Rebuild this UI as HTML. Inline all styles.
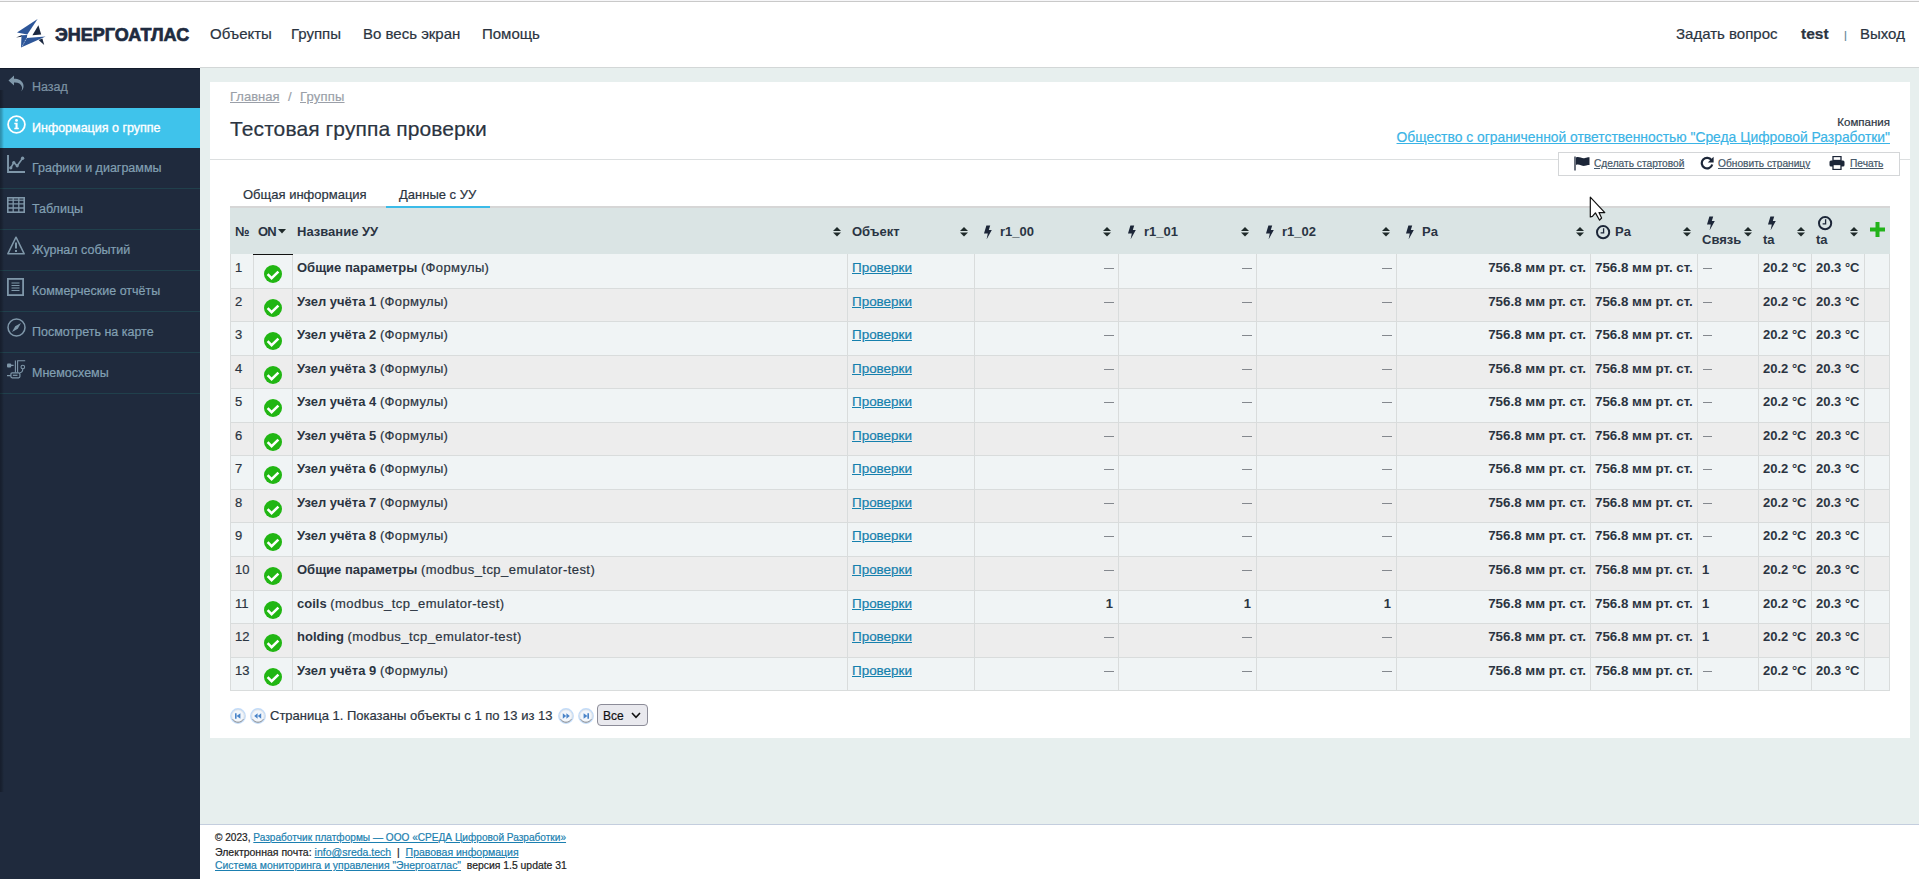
<!DOCTYPE html>
<html lang="ru">
<head>
<meta charset="utf-8">
<title>Энергоатлас</title>
<style>
*{box-sizing:border-box;}
html,body{margin:0;padding:0;}
body{width:1919px;height:879px;overflow:hidden;position:relative;background:#e7efee;font-family:"Liberation Sans",sans-serif;color:#2b3441;-webkit-text-stroke:0.2px currentColor;}
.abs{position:absolute;white-space:nowrap;}
.ic{position:absolute;display:block;}
#hdr{position:absolute;left:0;top:0;width:1919px;height:68px;background:#fff;}
#hdr .topline{position:absolute;left:0;top:1px;width:1919px;height:1px;background:#c9c9c9;}
#hdr .top0{position:absolute;left:0;top:0;width:1919px;height:1px;background:#f6f6f8;}
#hdr .bot{position:absolute;left:200px;top:67px;width:1719px;height:1px;background:#d3d7d7;}
.nav{position:absolute;top:24px;font-size:15px;line-height:20px;color:#2b3441;white-space:nowrap;}
#side{position:absolute;left:0;top:68px;width:200px;height:811px;background:#1f2a3d;}
#side .shadow{position:absolute;left:0;top:0;width:2px;height:724px;background:#19212f;}
.shd{position:absolute;left:0;top:90px;width:4px;height:702px;background:linear-gradient(to right,rgba(0,0,0,0.28),rgba(0,0,0,0.2) 40%,rgba(0,0,0,0) 100%);z-index:5;}
.shd0{position:absolute;left:0;top:68px;width:200px;height:1px;background:#131c2c;z-index:5;}
.si{position:absolute;left:0;width:200px;height:40px;}
.si .t{position:absolute;left:32px;top:12px;font-size:12.5px;line-height:16px;color:#82a0b3;white-space:nowrap;}
.si.act{background:#3fc3eb;}
.si.act .t{color:#fff;-webkit-text-stroke:0.35px #fff;}
.sdiv{position:absolute;left:0;width:200px;height:1px;background:#20404c;}
#panel{position:absolute;left:210px;top:82px;width:1700px;height:656px;background:#fff;}
a{color:inherit;}
.tb{position:absolute;top:187px;font-size:13px;line-height:16px;color:#2b3441;white-space:nowrap;}
.th{position:absolute;font-size:13px;line-height:16px;font-weight:bold;color:#2a3443;white-space:nowrap;}
.cell{position:absolute;font-size:13px;line-height:16px;white-space:nowrap;color:#2b3441;}
.b,b,.th{font-weight:bold;-webkit-text-stroke:0;}
.dash{color:#7a8088;}
.lnk{color:#1580ad;text-decoration:underline;font-size:13.45px;}
#foot{position:absolute;left:200px;top:824px;width:1719px;height:55px;background:#fff;border-top:1px solid #c4cede;}
#foot .ln{position:absolute;left:15px;font-size:10.1px;line-height:14px;color:#222;white-space:nowrap;}
#foot a{color:#1b7fb0;text-decoration:underline;}
</style>
</head>
<body>

<div id="hdr">
  <div class="top0"></div><div class="topline"></div>
  <svg class="ic" style="left:12px;top:14px" width="40" height="38" viewBox="0 0 40 38">
    <polygon points="25.6,5 5,18.6 15.3,20.6" fill="#2d5699"/>
    <polygon points="26.4,11.3 29.2,20.6 20.4,21.3" fill="#1b2840"/>
    <polygon points="4,23.6 10,21 9.6,22.8" fill="#1b2840"/>
    <polygon points="9.5,21.2 15.2,21 14.8,23.9 33.6,22.4 9,33.4" fill="#2d5699"/>
    <polygon points="26.6,26 30.4,24.6 32.2,30.9" fill="#1b2840"/>
    <path d="M14.6 24.2 L10 32.6" stroke="#fff" stroke-width="0.6" stroke-dasharray="1.2 0.8"/>
  </svg>
  <div class="abs" style="left:55px;top:23px;font-size:18px;line-height:24px;font-weight:bold;color:#1e2b40;-webkit-text-stroke:0.7px #1e2b40;">ЭНЕРГОАТЛАС</div>
  <div class="nav" style="left:210px">Объекты</div>
  <div class="nav" style="left:291px">Группы</div>
  <div class="nav" style="left:363px">Во весь экран</div>
  <div class="nav" style="left:482px">Помощь</div>
  <div class="nav" style="left:1676px">Задать вопрос</div>
  <div class="nav" style="left:1801px;font-weight:bold;font-size:15.5px">test</div>
  <div class="nav" style="left:1844px;font-size:11px;color:#5f7f95;top:25px">|</div>
  <div class="nav" style="left:1860px">Выход</div>
  <div class="bot"></div>
</div>

<div id="side"></div><div class="shd"></div><div class="shd0"></div>
<div class="si" style="top:68px"><svg class="ic" style="left:8px;top:7px" width="16" height="17" viewBox="0 0 16 17"><path d="M6 0.5 L0.5 5.5 L6 10.5 L6 7.5 C10 7.3 13 8.5 14 12 C14.3 13.5 13.8 15.5 13 16.5 C15.5 14.5 16 11.5 15.2 9 C14 5.5 10.5 3.8 6 3.8 Z" fill="#7f97a9"/></svg><div class="t" style="top:11px;color:#7d93a4">Назад</div></div>
<div class="si act" style="top:108px"><svg class="ic" style="left:7px;top:7px" width="19" height="19" viewBox="0 0 19 19"><circle cx="9.5" cy="9.5" r="8.4" fill="none" stroke="#fff" stroke-width="1.8"/><circle cx="9.5" cy="5.4" r="1.4" fill="#fff"/><path d="M7.3 7.7 H10.6 V12.8 H11.8 V14.3 H7.3 V12.8 H8.5 V9.2 H7.3 Z" fill="#fff"/></svg><div class="t">Информация о группе</div></div>
<div class="si" style="top:148px"><svg class="ic" style="left:7px;top:7px" width="18" height="18" viewBox="0 0 18 18"><path d="M1 0 V17 H18" fill="none" stroke="#7f97a9" stroke-width="1.9"/><path d="M3.8 12.8 L6.8 7.6 L10.2 10.8 L15.6 3.2" fill="none" stroke="#7f97a9" stroke-width="1.6"/><circle cx="3.8" cy="12.8" r="1.6" fill="#7f97a9"/><circle cx="6.8" cy="7.6" r="1.6" fill="#7f97a9"/><circle cx="10.2" cy="10.8" r="1.6" fill="#7f97a9"/><circle cx="15.6" cy="3.2" r="1.7" fill="#7f97a9"/></svg><div class="t">Графики и диаграммы</div></div>
<div class="si" style="top:189px"><svg class="ic" style="left:7px;top:8px" width="18" height="16" viewBox="0 0 18 16"><rect x="0.8" y="0.8" width="16.4" height="14.4" fill="none" stroke="#7f97a9" stroke-width="1.6"/><path d="M0.8 3.2 H17.2" stroke="#7f97a9" stroke-width="1.2"/><path d="M0.8 6.8 H17.2 M0.8 11 H17.2 M6.2 0.8 V15.2 M11.8 0.8 V15.2" stroke="#7f97a9" stroke-width="1.3"/></svg><div class="t">Таблицы</div></div>
<div class="si" style="top:230px"><svg class="ic" style="left:7px;top:6px" width="18" height="19" viewBox="0 0 18 19"><path d="M9 1.2 L17.2 17.8 H0.8 Z" fill="none" stroke="#7f97a9" stroke-width="1.5" stroke-linejoin="round"/><rect x="8" y="6.5" width="2" height="6" fill="#7f97a9"/><rect x="8" y="14" width="2" height="2" fill="#7f97a9"/></svg><div class="t">Журнал событий</div></div>
<div class="si" style="top:271px"><svg class="ic" style="left:7px;top:7px" width="17" height="18" viewBox="0 0 17 18"><rect x="0.9" y="0.9" width="15.2" height="16.2" fill="none" stroke="#7f97a9" stroke-width="1.8"/><path d="M4.5 5 H12.5 M4.5 7.5 H12.5 M4.5 10 H12.5 M4.5 12.5 H12.5" stroke="#7f97a9" stroke-width="1.1"/></svg><div class="t">Коммерческие отчёты</div></div>
<div class="si" style="top:312px"><svg class="ic" style="left:7px;top:6px" width="19" height="19" viewBox="0 0 19 19"><circle cx="9.5" cy="9.5" r="8.5" fill="none" stroke="#7f97a9" stroke-width="1.5"/><path d="M14 5 L10.8 10.8 L5 14 L8.2 8.2 Z" fill="#7f97a9"/></svg><div class="t">Посмотреть на карте</div></div>
<div class="si" style="top:353px"><svg class="ic" style="left:7px;top:7px" width="19" height="19" viewBox="0 0 19 19"><rect x="0" y="3.4" width="4.2" height="4" rx="1" fill="#7f97a9"/><path d="M4 5.4 H6.6 M8.4 12.6 V0.6 M10.6 12.6 V0.8 H18.2 M15.8 8.8 C15.8 11.5 14.5 12.6 12.8 12.8 M0 15.6 H3.8" fill="none" stroke="#7f97a9" stroke-width="1.1"/><circle cx="15.8" cy="7" r="1.8" fill="none" stroke="#7f97a9" stroke-width="1.1"/><rect x="3.9" y="12.8" width="9" height="5" rx="1.2" fill="none" stroke="#7f97a9" stroke-width="1.2"/><rect x="5.9" y="14.7" width="4.6" height="1.2" fill="#7f97a9"/></svg><div class="t">Мнемосхемы</div></div>
<div class="sdiv" style="top:188px"></div>
<div class="sdiv" style="top:229px"></div>
<div class="sdiv" style="top:270px"></div>
<div class="sdiv" style="top:311px"></div>
<div class="sdiv" style="top:352px"></div>
<div class="sdiv" style="top:393px"></div>
<div id="panel"></div>
<div class="abs" style="left:230px;top:89px;font-size:13px;line-height:16px;color:#9a9fa8;text-decoration:underline">Главная</div>
<div class="abs" style="left:288px;top:89px;font-size:13px;line-height:16px;color:#9a9fa8">/</div>
<div class="abs" style="left:300px;top:89px;font-size:13px;line-height:16px;color:#9a9fa8;text-decoration:underline;letter-spacing:0.2px">Группы</div>
<div class="abs" style="left:230px;top:117px;font-size:21px;line-height:24px;color:#2b3441;letter-spacing:0.1px">Тестовая группа проверки</div>
<div class="abs" style="right:29px;top:115px;font-size:11.5px;line-height:14px;color:#2b3441">Компания</div>
<div class="abs" style="right:29px;top:128px;font-size:13.86px;line-height:18px;color:#3ab4e6;text-decoration:underline">Общество с ограниченной ответственностью "Среда Цифровой Разработки"</div>
<div class="abs" style="left:210px;top:159px;width:1700px;height:1px;background:#dcdfe0"></div>
<div class="abs" style="left:1558px;top:152px;width:342px;height:24px;background:#fff;border:1px solid #d4d6d8"></div>
<svg class="ic" style="left:1574px;top:156px" width="16" height="15" viewBox="0 0 16 15"><path d="M1 0.5 V14.5" stroke="#1c2638" stroke-width="1.3"/><path d="M2 1.5 C5 0 8 3 11 2 C13 1.5 14 1 15.5 1.2 V9 C14 8.8 13 9.3 11 9.8 C8 10.5 5 7.5 2 9 Z" fill="#1c2638"/></svg>
<div class="abs" style="left:1594px;top:157px;font-size:10.2px;line-height:13px;color:#465869;text-decoration:underline">Сделать стартовой</div>
<svg class="ic" style="left:1700px;top:156px" width="14" height="14" viewBox="0 0 14 14"><path d="M11.5 4.2 A5.3 5.3 0 1 0 12.2 8.5" fill="none" stroke="#1c2638" stroke-width="2.2"/><path d="M13.6 0.8 V6.6 H7.8 Z" fill="#1c2638"/></svg>
<div class="abs" style="left:1718px;top:157px;font-size:10.2px;line-height:13px;color:#465869;text-decoration:underline">Обновить страницу</div>
<svg class="ic" style="left:1829px;top:156px" width="16" height="14" viewBox="0 0 16 14"><rect x="4" y="0.5" width="8" height="4" fill="none" stroke="#1c2638" stroke-width="1.3"/><rect x="0.5" y="4.5" width="15" height="6" rx="1.5" fill="#1c2638"/><rect x="4" y="8.5" width="8" height="5" fill="#fff" stroke="#1c2638" stroke-width="1.3"/></svg>
<div class="abs" style="left:1850px;top:157px;font-size:10.2px;line-height:13px;color:#465869;text-decoration:underline">Печать</div>
<div class="tb" style="left:243px">Общая информация</div>
<div class="tb" style="left:399px">Данные с УУ</div>
<div class="abs" style="left:230px;top:206px;width:1660px;height:2px;background:#d6d6d6"></div>
<div class="abs" style="left:386px;top:206px;width:104px;height:2px;background:#3bbbe8"></div>
<div class="abs" style="left:230px;top:208px;width:1660px;height:46px;background:#dae4e4"></div>

<div class="th" style="left:235px;top:224px">№</div>
<div class="th" style="left:258px;top:224px;letter-spacing:-0.8px">ON</div>
<svg class="ic" style="left:278px;top:229px" width="8" height="5" viewBox="0 0 8 5"><path d="M0 0 H8 L4 4.5 Z" fill="#1f2a2a"/></svg>
<div class="th" style="left:297px;top:224px">Название УУ</div>
<svg class="ic" style="left:833px;top:227px" width="8" height="10" viewBox="0 0 8 10"><path d="M4 0 L8 4 L0 4 Z M0 5.6 L8 5.6 L4 9.6 Z" fill="#1f2a2a"/></svg>
<div class="th" style="left:852px;top:224px">Объект</div>
<svg class="ic" style="left:960px;top:227px" width="8" height="10" viewBox="0 0 8 10"><path d="M4 0 L8 4 L0 4 Z M0 5.6 L8 5.6 L4 9.6 Z" fill="#1f2a2a"/></svg>
<svg class="ic" style="left:983px;top:225px" width="9" height="14" viewBox="0 0 9 14"><path d="M3.4 0.6 L7.2 0.6 L5.8 5 L8.8 5 L3.6 14.4 L4.8 8.4 L1 8.4 Z" fill="#1c2638"/></svg>
<div class="th" style="left:1000px;top:224px">r1_00</div>
<svg class="ic" style="left:1103px;top:227px" width="8" height="10" viewBox="0 0 8 10"><path d="M4 0 L8 4 L0 4 Z M0 5.6 L8 5.6 L4 9.6 Z" fill="#1f2a2a"/></svg>
<svg class="ic" style="left:1127px;top:225px" width="9" height="14" viewBox="0 0 9 14"><path d="M3.4 0.6 L7.2 0.6 L5.8 5 L8.8 5 L3.6 14.4 L4.8 8.4 L1 8.4 Z" fill="#1c2638"/></svg>
<div class="th" style="left:1144px;top:224px">r1_01</div>
<svg class="ic" style="left:1241px;top:227px" width="8" height="10" viewBox="0 0 8 10"><path d="M4 0 L8 4 L0 4 Z M0 5.6 L8 5.6 L4 9.6 Z" fill="#1f2a2a"/></svg>
<svg class="ic" style="left:1265px;top:225px" width="9" height="14" viewBox="0 0 9 14"><path d="M3.4 0.6 L7.2 0.6 L5.8 5 L8.8 5 L3.6 14.4 L4.8 8.4 L1 8.4 Z" fill="#1c2638"/></svg>
<div class="th" style="left:1282px;top:224px">r1_02</div>
<svg class="ic" style="left:1382px;top:227px" width="8" height="10" viewBox="0 0 8 10"><path d="M4 0 L8 4 L0 4 Z M0 5.6 L8 5.6 L4 9.6 Z" fill="#1f2a2a"/></svg>
<svg class="ic" style="left:1405px;top:225px" width="9" height="14" viewBox="0 0 9 14"><path d="M3.4 0.6 L7.2 0.6 L5.8 5 L8.8 5 L3.6 14.4 L4.8 8.4 L1 8.4 Z" fill="#1c2638"/></svg>
<div class="th" style="left:1422px;top:224px">Pa</div>
<svg class="ic" style="left:1576px;top:227px" width="8" height="10" viewBox="0 0 8 10"><path d="M4 0 L8 4 L0 4 Z M0 5.6 L8 5.6 L4 9.6 Z" fill="#1f2a2a"/></svg>
<svg class="ic" style="left:1595px;top:224px" width="16" height="16" viewBox="0 0 16 16"><circle cx="8.1" cy="8.2" r="6.1" fill="none" stroke="#1c2638" stroke-width="2"/><path d="M8.6 4.3 V8.9 H5.6" fill="none" stroke="#1c2638" stroke-width="1.3"/></svg>
<div class="th" style="left:1615px;top:224px">Pa</div>
<svg class="ic" style="left:1683px;top:227px" width="8" height="10" viewBox="0 0 8 10"><path d="M4 0 L8 4 L0 4 Z M0 5.6 L8 5.6 L4 9.6 Z" fill="#1f2a2a"/></svg>
<svg class="ic" style="left:1706px;top:216px" width="9" height="14" viewBox="0 0 9 14"><path d="M3.4 0.6 L7.2 0.6 L5.8 5 L8.8 5 L3.6 14.4 L4.8 8.4 L1 8.4 Z" fill="#1c2638"/></svg>
<div class="th" style="left:1702px;top:232px">Связь</div>
<svg class="ic" style="left:1744px;top:227px" width="8" height="10" viewBox="0 0 8 10"><path d="M4 0 L8 4 L0 4 Z M0 5.6 L8 5.6 L4 9.6 Z" fill="#1f2a2a"/></svg>
<svg class="ic" style="left:1767px;top:216px" width="9" height="14" viewBox="0 0 9 14"><path d="M3.4 0.6 L7.2 0.6 L5.8 5 L8.8 5 L3.6 14.4 L4.8 8.4 L1 8.4 Z" fill="#1c2638"/></svg>
<div class="th" style="left:1763px;top:232px">ta</div>
<svg class="ic" style="left:1797px;top:227px" width="8" height="10" viewBox="0 0 8 10"><path d="M4 0 L8 4 L0 4 Z M0 5.6 L8 5.6 L4 9.6 Z" fill="#1f2a2a"/></svg>
<svg class="ic" style="left:1817px;top:215px" width="16" height="16" viewBox="0 0 16 16"><circle cx="8.1" cy="8.2" r="6.1" fill="none" stroke="#1c2638" stroke-width="2"/><path d="M8.6 4.3 V8.9 H5.6" fill="none" stroke="#1c2638" stroke-width="1.3"/></svg>
<div class="th" style="left:1816px;top:232px">ta</div>
<svg class="ic" style="left:1850px;top:227px" width="8" height="10" viewBox="0 0 8 10"><path d="M4 0 L8 4 L0 4 Z M0 5.6 L8 5.6 L4 9.6 Z" fill="#1f2a2a"/></svg>
<svg class="ic" style="left:1870px;top:222px" width="15" height="15" viewBox="0 0 15 15"><path d="M5.5 0 H9.5 V5.5 H15 V9.5 H9.5 V15 H5.5 V9.5 H0 V5.5 H5.5 Z" fill="#22b31a"/></svg>
<div class="abs" style="left:230px;top:254px;width:1660px;height:437px;background:#d9dcdc"></div>
<div class="abs" style="left:231px;top:254px;width:22px;height:34px;background:#f0f4f5"></div>
<div class="abs" style="left:254px;top:254px;width:38px;height:34px;background:#f0f4f5"></div>
<div class="abs" style="left:293px;top:254px;width:554px;height:34px;background:#f0f4f5"></div>
<div class="abs" style="left:848px;top:254px;width:126px;height:34px;background:#f0f4f5"></div>
<div class="abs" style="left:975px;top:254px;width:143px;height:34px;background:#f0f4f5"></div>
<div class="abs" style="left:1119px;top:254px;width:137px;height:34px;background:#f0f4f5"></div>
<div class="abs" style="left:1257px;top:254px;width:139px;height:34px;background:#f0f4f5"></div>
<div class="abs" style="left:1397px;top:254px;width:193px;height:34px;background:#f0f4f5"></div>
<div class="abs" style="left:1591px;top:254px;width:106px;height:34px;background:#f0f4f5"></div>
<div class="abs" style="left:1698px;top:254px;width:60px;height:34px;background:#f0f4f5"></div>
<div class="abs" style="left:1759px;top:254px;width:52px;height:34px;background:#f0f4f5"></div>
<div class="abs" style="left:1812px;top:254px;width:52px;height:34px;background:#f0f4f5"></div>
<div class="abs" style="left:1865px;top:254px;width:24px;height:34px;background:#f0f4f5"></div>
<div class="cell" style="left:235px;top:260px">1</div>
<svg class="ic" style="left:264px;top:264.5px" width="18" height="18" viewBox="0 0 18 18"><circle cx="9" cy="9" r="9" fill="#21b613"/><path d="M3.6 9.2 L7.6 13.2 L14.4 6.6" fill="none" stroke="#fff" stroke-width="2.5"/></svg>
<div class="cell" style="left:297px;top:260px"><b>Общие параметры</b> <span style="letter-spacing:0.35px">(Формулы)</span></div>
<div class="cell lnk" style="left:852px;top:260px">Проверки</div>
<div class="abs" style="left:1104px;top:268px;width:9.5px;height:1px;background:#84888e"></div>
<div class="abs" style="left:1242px;top:268px;width:9.5px;height:1px;background:#84888e"></div>
<div class="abs" style="left:1382px;top:268px;width:9.5px;height:1px;background:#84888e"></div>
<div class="cell b" style="right:333px;top:260px;font-size:13.35px">756.8 мм рт. ст.</div>
<div class="cell b" style="left:1595px;top:260px;font-size:13.35px">756.8 мм рт. ст.</div>
<div class="abs" style="left:1702.5px;top:268px;width:9.5px;height:1px;background:#84888e"></div>
<div class="cell b" style="left:1763px;top:260px">20.2 °C</div>
<div class="cell b" style="left:1816px;top:260px">20.3 °C</div>
<div class="abs" style="left:231px;top:289px;width:22px;height:32px;background:#ededed"></div>
<div class="abs" style="left:254px;top:289px;width:38px;height:32px;background:#ededed"></div>
<div class="abs" style="left:293px;top:289px;width:554px;height:32px;background:#ededed"></div>
<div class="abs" style="left:848px;top:289px;width:126px;height:32px;background:#ededed"></div>
<div class="abs" style="left:975px;top:289px;width:143px;height:32px;background:#ededed"></div>
<div class="abs" style="left:1119px;top:289px;width:137px;height:32px;background:#ededed"></div>
<div class="abs" style="left:1257px;top:289px;width:139px;height:32px;background:#ededed"></div>
<div class="abs" style="left:1397px;top:289px;width:193px;height:32px;background:#ededed"></div>
<div class="abs" style="left:1591px;top:289px;width:106px;height:32px;background:#ededed"></div>
<div class="abs" style="left:1698px;top:289px;width:60px;height:32px;background:#ededed"></div>
<div class="abs" style="left:1759px;top:289px;width:52px;height:32px;background:#ededed"></div>
<div class="abs" style="left:1812px;top:289px;width:52px;height:32px;background:#ededed"></div>
<div class="abs" style="left:1865px;top:289px;width:24px;height:32px;background:#ededed"></div>
<div class="cell" style="left:235px;top:294px">2</div>
<svg class="ic" style="left:264px;top:298.5px" width="18" height="18" viewBox="0 0 18 18"><circle cx="9" cy="9" r="9" fill="#21b613"/><path d="M3.6 9.2 L7.6 13.2 L14.4 6.6" fill="none" stroke="#fff" stroke-width="2.5"/></svg>
<div class="cell" style="left:297px;top:294px"><b>Узел учёта 1</b> <span style="letter-spacing:0.35px">(Формулы)</span></div>
<div class="cell lnk" style="left:852px;top:294px">Проверки</div>
<div class="abs" style="left:1104px;top:302px;width:9.5px;height:1px;background:#84888e"></div>
<div class="abs" style="left:1242px;top:302px;width:9.5px;height:1px;background:#84888e"></div>
<div class="abs" style="left:1382px;top:302px;width:9.5px;height:1px;background:#84888e"></div>
<div class="cell b" style="right:333px;top:294px;font-size:13.35px">756.8 мм рт. ст.</div>
<div class="cell b" style="left:1595px;top:294px;font-size:13.35px">756.8 мм рт. ст.</div>
<div class="abs" style="left:1702.5px;top:302px;width:9.5px;height:1px;background:#84888e"></div>
<div class="cell b" style="left:1763px;top:294px">20.2 °C</div>
<div class="cell b" style="left:1816px;top:294px">20.3 °C</div>
<div class="abs" style="left:231px;top:322px;width:22px;height:33px;background:#f0f4f5"></div>
<div class="abs" style="left:254px;top:322px;width:38px;height:33px;background:#f0f4f5"></div>
<div class="abs" style="left:293px;top:322px;width:554px;height:33px;background:#f0f4f5"></div>
<div class="abs" style="left:848px;top:322px;width:126px;height:33px;background:#f0f4f5"></div>
<div class="abs" style="left:975px;top:322px;width:143px;height:33px;background:#f0f4f5"></div>
<div class="abs" style="left:1119px;top:322px;width:137px;height:33px;background:#f0f4f5"></div>
<div class="abs" style="left:1257px;top:322px;width:139px;height:33px;background:#f0f4f5"></div>
<div class="abs" style="left:1397px;top:322px;width:193px;height:33px;background:#f0f4f5"></div>
<div class="abs" style="left:1591px;top:322px;width:106px;height:33px;background:#f0f4f5"></div>
<div class="abs" style="left:1698px;top:322px;width:60px;height:33px;background:#f0f4f5"></div>
<div class="abs" style="left:1759px;top:322px;width:52px;height:33px;background:#f0f4f5"></div>
<div class="abs" style="left:1812px;top:322px;width:52px;height:33px;background:#f0f4f5"></div>
<div class="abs" style="left:1865px;top:322px;width:24px;height:33px;background:#f0f4f5"></div>
<div class="cell" style="left:235px;top:327px">3</div>
<svg class="ic" style="left:264px;top:331.5px" width="18" height="18" viewBox="0 0 18 18"><circle cx="9" cy="9" r="9" fill="#21b613"/><path d="M3.6 9.2 L7.6 13.2 L14.4 6.6" fill="none" stroke="#fff" stroke-width="2.5"/></svg>
<div class="cell" style="left:297px;top:327px"><b>Узел учёта 2</b> <span style="letter-spacing:0.35px">(Формулы)</span></div>
<div class="cell lnk" style="left:852px;top:327px">Проверки</div>
<div class="abs" style="left:1104px;top:335px;width:9.5px;height:1px;background:#84888e"></div>
<div class="abs" style="left:1242px;top:335px;width:9.5px;height:1px;background:#84888e"></div>
<div class="abs" style="left:1382px;top:335px;width:9.5px;height:1px;background:#84888e"></div>
<div class="cell b" style="right:333px;top:327px;font-size:13.35px">756.8 мм рт. ст.</div>
<div class="cell b" style="left:1595px;top:327px;font-size:13.35px">756.8 мм рт. ст.</div>
<div class="abs" style="left:1702.5px;top:335px;width:9.5px;height:1px;background:#84888e"></div>
<div class="cell b" style="left:1763px;top:327px">20.2 °C</div>
<div class="cell b" style="left:1816px;top:327px">20.3 °C</div>
<div class="abs" style="left:231px;top:356px;width:22px;height:32px;background:#ededed"></div>
<div class="abs" style="left:254px;top:356px;width:38px;height:32px;background:#ededed"></div>
<div class="abs" style="left:293px;top:356px;width:554px;height:32px;background:#ededed"></div>
<div class="abs" style="left:848px;top:356px;width:126px;height:32px;background:#ededed"></div>
<div class="abs" style="left:975px;top:356px;width:143px;height:32px;background:#ededed"></div>
<div class="abs" style="left:1119px;top:356px;width:137px;height:32px;background:#ededed"></div>
<div class="abs" style="left:1257px;top:356px;width:139px;height:32px;background:#ededed"></div>
<div class="abs" style="left:1397px;top:356px;width:193px;height:32px;background:#ededed"></div>
<div class="abs" style="left:1591px;top:356px;width:106px;height:32px;background:#ededed"></div>
<div class="abs" style="left:1698px;top:356px;width:60px;height:32px;background:#ededed"></div>
<div class="abs" style="left:1759px;top:356px;width:52px;height:32px;background:#ededed"></div>
<div class="abs" style="left:1812px;top:356px;width:52px;height:32px;background:#ededed"></div>
<div class="abs" style="left:1865px;top:356px;width:24px;height:32px;background:#ededed"></div>
<div class="cell" style="left:235px;top:361px">4</div>
<svg class="ic" style="left:264px;top:365.5px" width="18" height="18" viewBox="0 0 18 18"><circle cx="9" cy="9" r="9" fill="#21b613"/><path d="M3.6 9.2 L7.6 13.2 L14.4 6.6" fill="none" stroke="#fff" stroke-width="2.5"/></svg>
<div class="cell" style="left:297px;top:361px"><b>Узел учёта 3</b> <span style="letter-spacing:0.35px">(Формулы)</span></div>
<div class="cell lnk" style="left:852px;top:361px">Проверки</div>
<div class="abs" style="left:1104px;top:369px;width:9.5px;height:1px;background:#84888e"></div>
<div class="abs" style="left:1242px;top:369px;width:9.5px;height:1px;background:#84888e"></div>
<div class="abs" style="left:1382px;top:369px;width:9.5px;height:1px;background:#84888e"></div>
<div class="cell b" style="right:333px;top:361px;font-size:13.35px">756.8 мм рт. ст.</div>
<div class="cell b" style="left:1595px;top:361px;font-size:13.35px">756.8 мм рт. ст.</div>
<div class="abs" style="left:1702.5px;top:369px;width:9.5px;height:1px;background:#84888e"></div>
<div class="cell b" style="left:1763px;top:361px">20.2 °C</div>
<div class="cell b" style="left:1816px;top:361px">20.3 °C</div>
<div class="abs" style="left:231px;top:389px;width:22px;height:33px;background:#f0f4f5"></div>
<div class="abs" style="left:254px;top:389px;width:38px;height:33px;background:#f0f4f5"></div>
<div class="abs" style="left:293px;top:389px;width:554px;height:33px;background:#f0f4f5"></div>
<div class="abs" style="left:848px;top:389px;width:126px;height:33px;background:#f0f4f5"></div>
<div class="abs" style="left:975px;top:389px;width:143px;height:33px;background:#f0f4f5"></div>
<div class="abs" style="left:1119px;top:389px;width:137px;height:33px;background:#f0f4f5"></div>
<div class="abs" style="left:1257px;top:389px;width:139px;height:33px;background:#f0f4f5"></div>
<div class="abs" style="left:1397px;top:389px;width:193px;height:33px;background:#f0f4f5"></div>
<div class="abs" style="left:1591px;top:389px;width:106px;height:33px;background:#f0f4f5"></div>
<div class="abs" style="left:1698px;top:389px;width:60px;height:33px;background:#f0f4f5"></div>
<div class="abs" style="left:1759px;top:389px;width:52px;height:33px;background:#f0f4f5"></div>
<div class="abs" style="left:1812px;top:389px;width:52px;height:33px;background:#f0f4f5"></div>
<div class="abs" style="left:1865px;top:389px;width:24px;height:33px;background:#f0f4f5"></div>
<div class="cell" style="left:235px;top:394px">5</div>
<svg class="ic" style="left:264px;top:398.5px" width="18" height="18" viewBox="0 0 18 18"><circle cx="9" cy="9" r="9" fill="#21b613"/><path d="M3.6 9.2 L7.6 13.2 L14.4 6.6" fill="none" stroke="#fff" stroke-width="2.5"/></svg>
<div class="cell" style="left:297px;top:394px"><b>Узел учёта 4</b> <span style="letter-spacing:0.35px">(Формулы)</span></div>
<div class="cell lnk" style="left:852px;top:394px">Проверки</div>
<div class="abs" style="left:1104px;top:402px;width:9.5px;height:1px;background:#84888e"></div>
<div class="abs" style="left:1242px;top:402px;width:9.5px;height:1px;background:#84888e"></div>
<div class="abs" style="left:1382px;top:402px;width:9.5px;height:1px;background:#84888e"></div>
<div class="cell b" style="right:333px;top:394px;font-size:13.35px">756.8 мм рт. ст.</div>
<div class="cell b" style="left:1595px;top:394px;font-size:13.35px">756.8 мм рт. ст.</div>
<div class="abs" style="left:1702.5px;top:402px;width:9.5px;height:1px;background:#84888e"></div>
<div class="cell b" style="left:1763px;top:394px">20.2 °C</div>
<div class="cell b" style="left:1816px;top:394px">20.3 °C</div>
<div class="abs" style="left:231px;top:423px;width:22px;height:32px;background:#ededed"></div>
<div class="abs" style="left:254px;top:423px;width:38px;height:32px;background:#ededed"></div>
<div class="abs" style="left:293px;top:423px;width:554px;height:32px;background:#ededed"></div>
<div class="abs" style="left:848px;top:423px;width:126px;height:32px;background:#ededed"></div>
<div class="abs" style="left:975px;top:423px;width:143px;height:32px;background:#ededed"></div>
<div class="abs" style="left:1119px;top:423px;width:137px;height:32px;background:#ededed"></div>
<div class="abs" style="left:1257px;top:423px;width:139px;height:32px;background:#ededed"></div>
<div class="abs" style="left:1397px;top:423px;width:193px;height:32px;background:#ededed"></div>
<div class="abs" style="left:1591px;top:423px;width:106px;height:32px;background:#ededed"></div>
<div class="abs" style="left:1698px;top:423px;width:60px;height:32px;background:#ededed"></div>
<div class="abs" style="left:1759px;top:423px;width:52px;height:32px;background:#ededed"></div>
<div class="abs" style="left:1812px;top:423px;width:52px;height:32px;background:#ededed"></div>
<div class="abs" style="left:1865px;top:423px;width:24px;height:32px;background:#ededed"></div>
<div class="cell" style="left:235px;top:428px">6</div>
<svg class="ic" style="left:264px;top:432.5px" width="18" height="18" viewBox="0 0 18 18"><circle cx="9" cy="9" r="9" fill="#21b613"/><path d="M3.6 9.2 L7.6 13.2 L14.4 6.6" fill="none" stroke="#fff" stroke-width="2.5"/></svg>
<div class="cell" style="left:297px;top:428px"><b>Узел учёта 5</b> <span style="letter-spacing:0.35px">(Формулы)</span></div>
<div class="cell lnk" style="left:852px;top:428px">Проверки</div>
<div class="abs" style="left:1104px;top:436px;width:9.5px;height:1px;background:#84888e"></div>
<div class="abs" style="left:1242px;top:436px;width:9.5px;height:1px;background:#84888e"></div>
<div class="abs" style="left:1382px;top:436px;width:9.5px;height:1px;background:#84888e"></div>
<div class="cell b" style="right:333px;top:428px;font-size:13.35px">756.8 мм рт. ст.</div>
<div class="cell b" style="left:1595px;top:428px;font-size:13.35px">756.8 мм рт. ст.</div>
<div class="abs" style="left:1702.5px;top:436px;width:9.5px;height:1px;background:#84888e"></div>
<div class="cell b" style="left:1763px;top:428px">20.2 °C</div>
<div class="cell b" style="left:1816px;top:428px">20.3 °C</div>
<div class="abs" style="left:231px;top:456px;width:22px;height:33px;background:#f0f4f5"></div>
<div class="abs" style="left:254px;top:456px;width:38px;height:33px;background:#f0f4f5"></div>
<div class="abs" style="left:293px;top:456px;width:554px;height:33px;background:#f0f4f5"></div>
<div class="abs" style="left:848px;top:456px;width:126px;height:33px;background:#f0f4f5"></div>
<div class="abs" style="left:975px;top:456px;width:143px;height:33px;background:#f0f4f5"></div>
<div class="abs" style="left:1119px;top:456px;width:137px;height:33px;background:#f0f4f5"></div>
<div class="abs" style="left:1257px;top:456px;width:139px;height:33px;background:#f0f4f5"></div>
<div class="abs" style="left:1397px;top:456px;width:193px;height:33px;background:#f0f4f5"></div>
<div class="abs" style="left:1591px;top:456px;width:106px;height:33px;background:#f0f4f5"></div>
<div class="abs" style="left:1698px;top:456px;width:60px;height:33px;background:#f0f4f5"></div>
<div class="abs" style="left:1759px;top:456px;width:52px;height:33px;background:#f0f4f5"></div>
<div class="abs" style="left:1812px;top:456px;width:52px;height:33px;background:#f0f4f5"></div>
<div class="abs" style="left:1865px;top:456px;width:24px;height:33px;background:#f0f4f5"></div>
<div class="cell" style="left:235px;top:461px">7</div>
<svg class="ic" style="left:264px;top:465.5px" width="18" height="18" viewBox="0 0 18 18"><circle cx="9" cy="9" r="9" fill="#21b613"/><path d="M3.6 9.2 L7.6 13.2 L14.4 6.6" fill="none" stroke="#fff" stroke-width="2.5"/></svg>
<div class="cell" style="left:297px;top:461px"><b>Узел учёта 6</b> <span style="letter-spacing:0.35px">(Формулы)</span></div>
<div class="cell lnk" style="left:852px;top:461px">Проверки</div>
<div class="abs" style="left:1104px;top:469px;width:9.5px;height:1px;background:#84888e"></div>
<div class="abs" style="left:1242px;top:469px;width:9.5px;height:1px;background:#84888e"></div>
<div class="abs" style="left:1382px;top:469px;width:9.5px;height:1px;background:#84888e"></div>
<div class="cell b" style="right:333px;top:461px;font-size:13.35px">756.8 мм рт. ст.</div>
<div class="cell b" style="left:1595px;top:461px;font-size:13.35px">756.8 мм рт. ст.</div>
<div class="abs" style="left:1702.5px;top:469px;width:9.5px;height:1px;background:#84888e"></div>
<div class="cell b" style="left:1763px;top:461px">20.2 °C</div>
<div class="cell b" style="left:1816px;top:461px">20.3 °C</div>
<div class="abs" style="left:231px;top:490px;width:22px;height:32px;background:#ededed"></div>
<div class="abs" style="left:254px;top:490px;width:38px;height:32px;background:#ededed"></div>
<div class="abs" style="left:293px;top:490px;width:554px;height:32px;background:#ededed"></div>
<div class="abs" style="left:848px;top:490px;width:126px;height:32px;background:#ededed"></div>
<div class="abs" style="left:975px;top:490px;width:143px;height:32px;background:#ededed"></div>
<div class="abs" style="left:1119px;top:490px;width:137px;height:32px;background:#ededed"></div>
<div class="abs" style="left:1257px;top:490px;width:139px;height:32px;background:#ededed"></div>
<div class="abs" style="left:1397px;top:490px;width:193px;height:32px;background:#ededed"></div>
<div class="abs" style="left:1591px;top:490px;width:106px;height:32px;background:#ededed"></div>
<div class="abs" style="left:1698px;top:490px;width:60px;height:32px;background:#ededed"></div>
<div class="abs" style="left:1759px;top:490px;width:52px;height:32px;background:#ededed"></div>
<div class="abs" style="left:1812px;top:490px;width:52px;height:32px;background:#ededed"></div>
<div class="abs" style="left:1865px;top:490px;width:24px;height:32px;background:#ededed"></div>
<div class="cell" style="left:235px;top:495px">8</div>
<svg class="ic" style="left:264px;top:499.5px" width="18" height="18" viewBox="0 0 18 18"><circle cx="9" cy="9" r="9" fill="#21b613"/><path d="M3.6 9.2 L7.6 13.2 L14.4 6.6" fill="none" stroke="#fff" stroke-width="2.5"/></svg>
<div class="cell" style="left:297px;top:495px"><b>Узел учёта 7</b> <span style="letter-spacing:0.35px">(Формулы)</span></div>
<div class="cell lnk" style="left:852px;top:495px">Проверки</div>
<div class="abs" style="left:1104px;top:503px;width:9.5px;height:1px;background:#84888e"></div>
<div class="abs" style="left:1242px;top:503px;width:9.5px;height:1px;background:#84888e"></div>
<div class="abs" style="left:1382px;top:503px;width:9.5px;height:1px;background:#84888e"></div>
<div class="cell b" style="right:333px;top:495px;font-size:13.35px">756.8 мм рт. ст.</div>
<div class="cell b" style="left:1595px;top:495px;font-size:13.35px">756.8 мм рт. ст.</div>
<div class="abs" style="left:1702.5px;top:503px;width:9.5px;height:1px;background:#84888e"></div>
<div class="cell b" style="left:1763px;top:495px">20.2 °C</div>
<div class="cell b" style="left:1816px;top:495px">20.3 °C</div>
<div class="abs" style="left:231px;top:523px;width:22px;height:33px;background:#f0f4f5"></div>
<div class="abs" style="left:254px;top:523px;width:38px;height:33px;background:#f0f4f5"></div>
<div class="abs" style="left:293px;top:523px;width:554px;height:33px;background:#f0f4f5"></div>
<div class="abs" style="left:848px;top:523px;width:126px;height:33px;background:#f0f4f5"></div>
<div class="abs" style="left:975px;top:523px;width:143px;height:33px;background:#f0f4f5"></div>
<div class="abs" style="left:1119px;top:523px;width:137px;height:33px;background:#f0f4f5"></div>
<div class="abs" style="left:1257px;top:523px;width:139px;height:33px;background:#f0f4f5"></div>
<div class="abs" style="left:1397px;top:523px;width:193px;height:33px;background:#f0f4f5"></div>
<div class="abs" style="left:1591px;top:523px;width:106px;height:33px;background:#f0f4f5"></div>
<div class="abs" style="left:1698px;top:523px;width:60px;height:33px;background:#f0f4f5"></div>
<div class="abs" style="left:1759px;top:523px;width:52px;height:33px;background:#f0f4f5"></div>
<div class="abs" style="left:1812px;top:523px;width:52px;height:33px;background:#f0f4f5"></div>
<div class="abs" style="left:1865px;top:523px;width:24px;height:33px;background:#f0f4f5"></div>
<div class="cell" style="left:235px;top:528px">9</div>
<svg class="ic" style="left:264px;top:532.5px" width="18" height="18" viewBox="0 0 18 18"><circle cx="9" cy="9" r="9" fill="#21b613"/><path d="M3.6 9.2 L7.6 13.2 L14.4 6.6" fill="none" stroke="#fff" stroke-width="2.5"/></svg>
<div class="cell" style="left:297px;top:528px"><b>Узел учёта 8</b> <span style="letter-spacing:0.35px">(Формулы)</span></div>
<div class="cell lnk" style="left:852px;top:528px">Проверки</div>
<div class="abs" style="left:1104px;top:536px;width:9.5px;height:1px;background:#84888e"></div>
<div class="abs" style="left:1242px;top:536px;width:9.5px;height:1px;background:#84888e"></div>
<div class="abs" style="left:1382px;top:536px;width:9.5px;height:1px;background:#84888e"></div>
<div class="cell b" style="right:333px;top:528px;font-size:13.35px">756.8 мм рт. ст.</div>
<div class="cell b" style="left:1595px;top:528px;font-size:13.35px">756.8 мм рт. ст.</div>
<div class="abs" style="left:1702.5px;top:536px;width:9.5px;height:1px;background:#84888e"></div>
<div class="cell b" style="left:1763px;top:528px">20.2 °C</div>
<div class="cell b" style="left:1816px;top:528px">20.3 °C</div>
<div class="abs" style="left:231px;top:557px;width:22px;height:33px;background:#ededed"></div>
<div class="abs" style="left:254px;top:557px;width:38px;height:33px;background:#ededed"></div>
<div class="abs" style="left:293px;top:557px;width:554px;height:33px;background:#ededed"></div>
<div class="abs" style="left:848px;top:557px;width:126px;height:33px;background:#ededed"></div>
<div class="abs" style="left:975px;top:557px;width:143px;height:33px;background:#ededed"></div>
<div class="abs" style="left:1119px;top:557px;width:137px;height:33px;background:#ededed"></div>
<div class="abs" style="left:1257px;top:557px;width:139px;height:33px;background:#ededed"></div>
<div class="abs" style="left:1397px;top:557px;width:193px;height:33px;background:#ededed"></div>
<div class="abs" style="left:1591px;top:557px;width:106px;height:33px;background:#ededed"></div>
<div class="abs" style="left:1698px;top:557px;width:60px;height:33px;background:#ededed"></div>
<div class="abs" style="left:1759px;top:557px;width:52px;height:33px;background:#ededed"></div>
<div class="abs" style="left:1812px;top:557px;width:52px;height:33px;background:#ededed"></div>
<div class="abs" style="left:1865px;top:557px;width:24px;height:33px;background:#ededed"></div>
<div class="cell" style="left:235px;top:562px">10</div>
<svg class="ic" style="left:264px;top:566.5px" width="18" height="18" viewBox="0 0 18 18"><circle cx="9" cy="9" r="9" fill="#21b613"/><path d="M3.6 9.2 L7.6 13.2 L14.4 6.6" fill="none" stroke="#fff" stroke-width="2.5"/></svg>
<div class="cell" style="left:297px;top:562px"><b>Общие параметры</b> <span style="letter-spacing:0.45px">(modbus_tcp_emulator-test)</span></div>
<div class="cell lnk" style="left:852px;top:562px">Проверки</div>
<div class="abs" style="left:1104px;top:570px;width:9.5px;height:1px;background:#84888e"></div>
<div class="abs" style="left:1242px;top:570px;width:9.5px;height:1px;background:#84888e"></div>
<div class="abs" style="left:1382px;top:570px;width:9.5px;height:1px;background:#84888e"></div>
<div class="cell b" style="right:333px;top:562px;font-size:13.35px">756.8 мм рт. ст.</div>
<div class="cell b" style="left:1595px;top:562px;font-size:13.35px">756.8 мм рт. ст.</div>
<div class="cell b" style="left:1702px;top:562px">1</div>
<div class="cell b" style="left:1763px;top:562px">20.2 °C</div>
<div class="cell b" style="left:1816px;top:562px">20.3 °C</div>
<div class="abs" style="left:231px;top:591px;width:22px;height:32px;background:#f0f4f5"></div>
<div class="abs" style="left:254px;top:591px;width:38px;height:32px;background:#f0f4f5"></div>
<div class="abs" style="left:293px;top:591px;width:554px;height:32px;background:#f0f4f5"></div>
<div class="abs" style="left:848px;top:591px;width:126px;height:32px;background:#f0f4f5"></div>
<div class="abs" style="left:975px;top:591px;width:143px;height:32px;background:#f0f4f5"></div>
<div class="abs" style="left:1119px;top:591px;width:137px;height:32px;background:#f0f4f5"></div>
<div class="abs" style="left:1257px;top:591px;width:139px;height:32px;background:#f0f4f5"></div>
<div class="abs" style="left:1397px;top:591px;width:193px;height:32px;background:#f0f4f5"></div>
<div class="abs" style="left:1591px;top:591px;width:106px;height:32px;background:#f0f4f5"></div>
<div class="abs" style="left:1698px;top:591px;width:60px;height:32px;background:#f0f4f5"></div>
<div class="abs" style="left:1759px;top:591px;width:52px;height:32px;background:#f0f4f5"></div>
<div class="abs" style="left:1812px;top:591px;width:52px;height:32px;background:#f0f4f5"></div>
<div class="abs" style="left:1865px;top:591px;width:24px;height:32px;background:#f0f4f5"></div>
<div class="cell" style="left:235px;top:596px">11</div>
<svg class="ic" style="left:264px;top:600.5px" width="18" height="18" viewBox="0 0 18 18"><circle cx="9" cy="9" r="9" fill="#21b613"/><path d="M3.6 9.2 L7.6 13.2 L14.4 6.6" fill="none" stroke="#fff" stroke-width="2.5"/></svg>
<div class="cell" style="left:297px;top:596px"><b>coils</b> <span style="letter-spacing:0.45px">(modbus_tcp_emulator-test)</span></div>
<div class="cell lnk" style="left:852px;top:596px">Проверки</div>
<div class="cell b" style="right:806px;top:596px">1</div>
<div class="cell b" style="right:668px;top:596px">1</div>
<div class="cell b" style="right:528px;top:596px">1</div>
<div class="cell b" style="right:333px;top:596px;font-size:13.35px">756.8 мм рт. ст.</div>
<div class="cell b" style="left:1595px;top:596px;font-size:13.35px">756.8 мм рт. ст.</div>
<div class="cell b" style="left:1702px;top:596px">1</div>
<div class="cell b" style="left:1763px;top:596px">20.2 °C</div>
<div class="cell b" style="left:1816px;top:596px">20.3 °C</div>
<div class="abs" style="left:231px;top:624px;width:22px;height:33px;background:#ededed"></div>
<div class="abs" style="left:254px;top:624px;width:38px;height:33px;background:#ededed"></div>
<div class="abs" style="left:293px;top:624px;width:554px;height:33px;background:#ededed"></div>
<div class="abs" style="left:848px;top:624px;width:126px;height:33px;background:#ededed"></div>
<div class="abs" style="left:975px;top:624px;width:143px;height:33px;background:#ededed"></div>
<div class="abs" style="left:1119px;top:624px;width:137px;height:33px;background:#ededed"></div>
<div class="abs" style="left:1257px;top:624px;width:139px;height:33px;background:#ededed"></div>
<div class="abs" style="left:1397px;top:624px;width:193px;height:33px;background:#ededed"></div>
<div class="abs" style="left:1591px;top:624px;width:106px;height:33px;background:#ededed"></div>
<div class="abs" style="left:1698px;top:624px;width:60px;height:33px;background:#ededed"></div>
<div class="abs" style="left:1759px;top:624px;width:52px;height:33px;background:#ededed"></div>
<div class="abs" style="left:1812px;top:624px;width:52px;height:33px;background:#ededed"></div>
<div class="abs" style="left:1865px;top:624px;width:24px;height:33px;background:#ededed"></div>
<div class="cell" style="left:235px;top:629px">12</div>
<svg class="ic" style="left:264px;top:633.5px" width="18" height="18" viewBox="0 0 18 18"><circle cx="9" cy="9" r="9" fill="#21b613"/><path d="M3.6 9.2 L7.6 13.2 L14.4 6.6" fill="none" stroke="#fff" stroke-width="2.5"/></svg>
<div class="cell" style="left:297px;top:629px"><b>holding</b> <span style="letter-spacing:0.45px">(modbus_tcp_emulator-test)</span></div>
<div class="cell lnk" style="left:852px;top:629px">Проверки</div>
<div class="abs" style="left:1104px;top:637px;width:9.5px;height:1px;background:#84888e"></div>
<div class="abs" style="left:1242px;top:637px;width:9.5px;height:1px;background:#84888e"></div>
<div class="abs" style="left:1382px;top:637px;width:9.5px;height:1px;background:#84888e"></div>
<div class="cell b" style="right:333px;top:629px;font-size:13.35px">756.8 мм рт. ст.</div>
<div class="cell b" style="left:1595px;top:629px;font-size:13.35px">756.8 мм рт. ст.</div>
<div class="cell b" style="left:1702px;top:629px">1</div>
<div class="cell b" style="left:1763px;top:629px">20.2 °C</div>
<div class="cell b" style="left:1816px;top:629px">20.3 °C</div>
<div class="abs" style="left:231px;top:658px;width:22px;height:32px;background:#f0f4f5"></div>
<div class="abs" style="left:254px;top:658px;width:38px;height:32px;background:#f0f4f5"></div>
<div class="abs" style="left:293px;top:658px;width:554px;height:32px;background:#f0f4f5"></div>
<div class="abs" style="left:848px;top:658px;width:126px;height:32px;background:#f0f4f5"></div>
<div class="abs" style="left:975px;top:658px;width:143px;height:32px;background:#f0f4f5"></div>
<div class="abs" style="left:1119px;top:658px;width:137px;height:32px;background:#f0f4f5"></div>
<div class="abs" style="left:1257px;top:658px;width:139px;height:32px;background:#f0f4f5"></div>
<div class="abs" style="left:1397px;top:658px;width:193px;height:32px;background:#f0f4f5"></div>
<div class="abs" style="left:1591px;top:658px;width:106px;height:32px;background:#f0f4f5"></div>
<div class="abs" style="left:1698px;top:658px;width:60px;height:32px;background:#f0f4f5"></div>
<div class="abs" style="left:1759px;top:658px;width:52px;height:32px;background:#f0f4f5"></div>
<div class="abs" style="left:1812px;top:658px;width:52px;height:32px;background:#f0f4f5"></div>
<div class="abs" style="left:1865px;top:658px;width:24px;height:32px;background:#f0f4f5"></div>
<div class="cell" style="left:235px;top:663px">13</div>
<svg class="ic" style="left:264px;top:667.5px" width="18" height="18" viewBox="0 0 18 18"><circle cx="9" cy="9" r="9" fill="#21b613"/><path d="M3.6 9.2 L7.6 13.2 L14.4 6.6" fill="none" stroke="#fff" stroke-width="2.5"/></svg>
<div class="cell" style="left:297px;top:663px"><b>Узел учёта 9</b> <span style="letter-spacing:0.35px">(Формулы)</span></div>
<div class="cell lnk" style="left:852px;top:663px">Проверки</div>
<div class="abs" style="left:1104px;top:671px;width:9.5px;height:1px;background:#84888e"></div>
<div class="abs" style="left:1242px;top:671px;width:9.5px;height:1px;background:#84888e"></div>
<div class="abs" style="left:1382px;top:671px;width:9.5px;height:1px;background:#84888e"></div>
<div class="cell b" style="right:333px;top:663px;font-size:13.35px">756.8 мм рт. ст.</div>
<div class="cell b" style="left:1595px;top:663px;font-size:13.35px">756.8 мм рт. ст.</div>
<div class="abs" style="left:1702.5px;top:671px;width:9.5px;height:1px;background:#84888e"></div>
<div class="cell b" style="left:1763px;top:663px">20.2 °C</div>
<div class="cell b" style="left:1816px;top:663px">20.3 °C</div>
<div class="abs" style="left:253px;top:254px;width:40px;height:1px;background:#111"></div>
<svg class="ic" style="left:229px;top:706.5px" width="18" height="18" viewBox="0 0 18 18"><circle cx="9" cy="9" r="7.1" fill="none" stroke="#c2dcfa" stroke-width="1.6"/><circle cx="9" cy="9" r="6.3" fill="#f2f6fb" stroke="#d6dadf" stroke-width="0.8"/><path d="M3.6 12.2 A6.3 6.3 0 0 0 14.4 12.2" fill="none" stroke="#8c9096" stroke-width="1"/><g transform="translate(1 1)"><path d="M5 5.2 V10.8 H6.6 V5.2 Z M6.6 8 L10.4 5.2 V10.8 Z" fill="#4a84c8"/></g></svg>
<svg class="ic" style="left:249px;top:706.5px" width="18" height="18" viewBox="0 0 18 18"><circle cx="9" cy="9" r="7.1" fill="none" stroke="#c2dcfa" stroke-width="1.6"/><circle cx="9" cy="9" r="6.3" fill="#f2f6fb" stroke="#d6dadf" stroke-width="0.8"/><path d="M3.6 12.2 A6.3 6.3 0 0 0 14.4 12.2" fill="none" stroke="#8c9096" stroke-width="1"/><g transform="translate(1 1)"><path d="M4.2 8 L7.6 5.2 V10.8 Z M7.8 8 L11.2 5.2 V10.8 Z" fill="#4a84c8"/></g></svg>
<div class="abs" style="left:270px;top:708px;font-size:13px;line-height:16px;color:#2b3441">Страница 1. Показаны объекты с 1 по 13 из 13</div>
<svg class="ic" style="left:557px;top:706.5px" width="18" height="18" viewBox="0 0 18 18"><circle cx="9" cy="9" r="7.1" fill="none" stroke="#c2dcfa" stroke-width="1.6"/><circle cx="9" cy="9" r="6.3" fill="#f2f6fb" stroke="#d6dadf" stroke-width="0.8"/><path d="M3.6 12.2 A6.3 6.3 0 0 0 14.4 12.2" fill="none" stroke="#8c9096" stroke-width="1"/><g transform="translate(1 1)"><path d="M4.8 5.2 L8.2 8 L4.8 10.8 Z M8.4 5.2 L11.8 8 L8.4 10.8 Z" fill="#4a84c8"/></g></svg>
<svg class="ic" style="left:577px;top:706.5px" width="18" height="18" viewBox="0 0 18 18"><circle cx="9" cy="9" r="7.1" fill="none" stroke="#c2dcfa" stroke-width="1.6"/><circle cx="9" cy="9" r="6.3" fill="#f2f6fb" stroke="#d6dadf" stroke-width="0.8"/><path d="M3.6 12.2 A6.3 6.3 0 0 0 14.4 12.2" fill="none" stroke="#8c9096" stroke-width="1"/><g transform="translate(1 1)"><path d="M5.6 5.2 L9.4 8 L5.6 10.8 Z M9.4 5.2 H11 V10.8 H9.4 Z" fill="#4a84c8"/></g></svg>
<div class="abs" style="left:597px;top:704px;width:51px;height:22px;border:1px solid #8c8c98;border-radius:4px;background:#e9e9ee"></div>
<div class="abs" style="left:603px;top:708px;font-size:12px;line-height:16px;color:#111">Все</div>
<svg class="ic" style="left:631px;top:712px" width="10" height="7" viewBox="0 0 10 7"><path d="M1 1 L5 5.3 L9 1" fill="none" stroke="#111" stroke-width="1.6"/></svg>
<svg class="ic" style="left:1589px;top:196px" width="18" height="26" viewBox="0 0 18 26"><path d="M1.3 1.2 V21 L3.4 20.4 L6.4 16.9 L10.6 24.2 L12.6 22 L10 16.6 H15.8 Z" fill="#fff" stroke="#111" stroke-width="1.2" stroke-linejoin="round"/></svg>
<div id="foot">
  <div class="ln" style="top:6px">© 2023, <a>Разработчик платформы — ООО «СРЕДА Цифровой Разработки»</a></div>
  <div class="ln" style="top:20px;font-size:10.5px">Электронная почта: <a>info@sreda.tech</a> &nbsp;|&nbsp; <a>Правовая информация</a></div>
  <div class="ln" style="top:34px;font-size:10.4px"><a>Система мониторинга и управления "Энергоатлас"</a> &nbsp;версия 1.5 update 31</div>
</div>
</body>
</html>
